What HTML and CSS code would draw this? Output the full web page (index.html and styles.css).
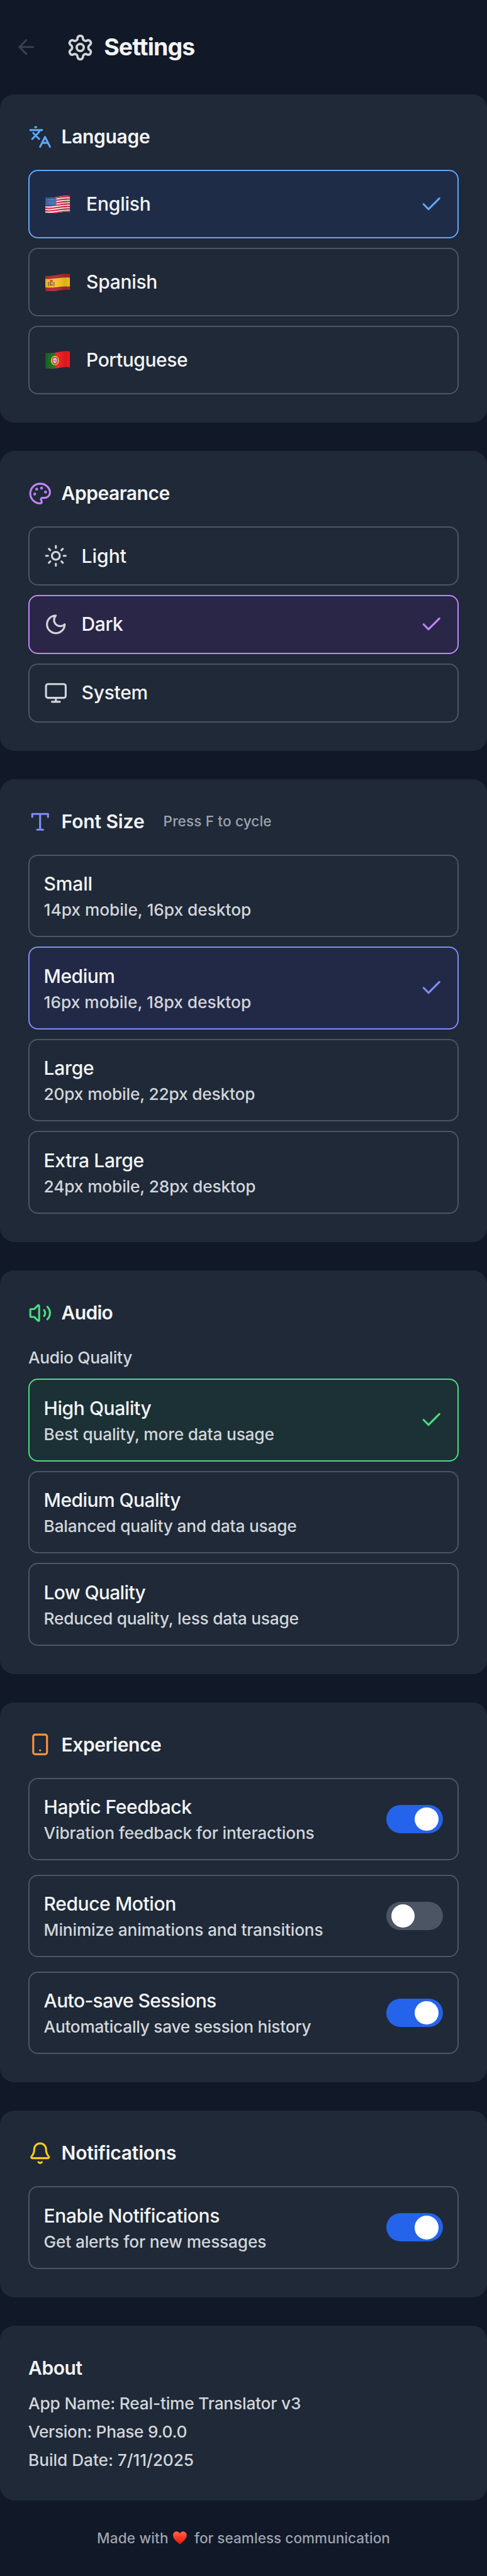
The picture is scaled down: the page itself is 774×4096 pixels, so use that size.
FILE: index.html
```html
<!DOCTYPE html>
<html lang="en">
<head>
<meta charset="utf-8">
<title>Settings</title>
<link rel="stylesheet" href="styles.css">
</head>
<body>
<svg class="defs" aria-hidden="true">
  <symbol id="check" viewBox="0 0 24 24"><path d="M20 6 9 17l-5-5"/></symbol>
  <linearGradient id="shade" x1="0" y1="0" x2="1" y2="0">
    <stop offset="0" stop-color="#000" stop-opacity=".12"/><stop offset=".3" stop-color="#fff" stop-opacity=".06"/>
    <stop offset=".8" stop-color="#000" stop-opacity=".12"/><stop offset="1" stop-color="#000" stop-opacity=".04"/>
  </linearGradient>
  <linearGradient id="heart" x1="0" y1="0" x2="0" y2="1"><stop offset="0" stop-color="#ff6a52"/><stop offset=".5" stop-color="#fb3522"/><stop offset="1" stop-color="#e0200f"/></linearGradient>
  <clipPath id="wave"><path d="M0 1.700C1 2.200 3 2.400 5.200 2.100 9.500 1.700 13 .2 17 .1 19 0 20.300 .2 21 .7V15.600C20 15.100 18 14.900 15.500 15.200 11.500 15.600 9 16.500 5 16.500 3 16.500 1 16.500 0 16Z"/></clipPath>
</svg>
<header class="header">
  <svg class="icon back" viewBox="0 0 24 24"><path d="m12 19-7-7 7-7M19 12H5"/></svg>
  <svg class="icon gear" viewBox="0 0 24 24"><path d="M12.220 2h-.44a2 2 0 0 0-2 2v.18a2 2 0 0 1-1 1.730l-.43.25a2 2 0 0 1-2 0l-.15-.08a2 2 0 0 0-2.730.73l-.22.38a2 2 0 0 0 .73 2.730l.15.1a2 2 0 0 1 1 1.720v.51a2 2 0 0 1-1 1.740l-.15.09a2 2 0 0 0-.73 2.730l.22.38a2 2 0 0 0 2.730.73l.15-.08a2 2 0 0 1 2 0l.43.25a2 2 0 0 1 1 1.730V20a2 2 0 0 0 2 2h.44a2 2 0 0 0 2-2v-.18a2 2 0 0 1 1-1.730l.43-.25a2 2 0 0 1 2 0l.15.08a2 2 0 0 0 2.730-.73l.22-.39a2 2 0 0 0-.73-2.730l-.15-.08a2 2 0 0 1-1-1.740v-.5a2 2 0 0 1 1-1.740l.15-.09a2 2 0 0 0 .73-2.730l-.22-.38a2 2 0 0 0-2.730-.73l-.15.08a2 2 0 0 1-2 0l-.43-.25a2 2 0 0 1-1-1.730V4a2 2 0 0 0-2-2z"/><circle cx="12" cy="12" r="3"/></svg>
  <h1 class="page-title">Settings</h1>
</header>
<main class="sections">
  <section class="card">
    <div class="card-head">
      <svg class="icon blue" viewBox="0 0 24 24"><path d="m5 8 6 6M4 14l6-6 2-3M2 5h12M7 2h1M22 22l-5-10-5 10M14 18h6"/></svg>
      <h2 class="title t-language">Language</h2>
    </div>
    <div class="options">
      <div class="option tall sel-blue">
        <svg class="flag" viewBox="0 0 21 16.500" preserveAspectRatio="none"><g clip-path="url(#wave)"><rect width="21" height="17" fill="#f7f4f5"/>
          <path d="M0 2.500C7 4 12 .2 21 1M0 4.800C7 6.300 12 2.500 21 3.300M0 7.100C7 8.600 12 4.800 21 5.600M0 9.400C7 10.900 12 7.100 21 7.900M0 11.700C7 13.200 12 9.400 21 10.200M0 14C7 15.500 12 11.700 21 12.500M0 16.300C7 17.800 12 14 21 14.800" fill="none" stroke="#dc1a35" stroke-width="1.150"/>
          <path d="M0 0H9.300V8.800C7 9.700 3 10.200 0 9.700Z" fill="#2a5b9f"/>
          <path d="M.8 3.800H9M.5 5.200H9M.8 6.600H9M.5 8H9" stroke="#b9cbe4" stroke-width=".55" stroke-dasharray=".55 .75"/>
          <rect width="21" height="17" fill="url(#shade)"/></g></svg>
        <span class="name t-english">English</span>
        <svg class="icon mark blue"><use href="#check"/></svg>
      </div>
      <div class="option tall">
        <svg class="flag" viewBox="0 0 21 16.500" preserveAspectRatio="none"><g clip-path="url(#wave)"><rect width="21" height="17" fill="#b0262f"/>
          <path d="M0 4.900C7 5.800 13 2.700 21 3.900V12.200C13 11.200 8 13.700 0 12.900Z" fill="#f7c81f"/>
          <rect x="3.700" y="7.300" width="2.800" height="4.200" rx="1" fill="#b5523b"/><path d="M3.900 6.700h2.400" stroke="#a8342c" stroke-width="1"/><path d="M2.700 7.800v4M7.400 7.800v4" stroke="#6d5f3c" stroke-width=".7"/><circle cx="5.500" cy="9.100" r=".7" fill="#dcc8cf"/>
          <rect width="21" height="17" fill="url(#shade)"/></g></svg>
        <span class="name t-spanish">Spanish</span>
      </div>
      <div class="option tall">
        <svg class="flag" viewBox="0 0 21 16.500" preserveAspectRatio="none"><g clip-path="url(#wave)"><rect width="21" height="17" fill="#f51c20"/><rect width="8.300" height="17" fill="#116a1b"/>
          <ellipse cx="8.200" cy="8.900" rx="3.500" ry="4.400" fill="#eed42c"/><ellipse cx="8.200" cy="8.900" rx="2.800" ry="3.500" fill="none" stroke="#69822c" stroke-width=".4"/>
          <path d="M6.100 6h4.200v3.800q0 2.400-2.100 2.800-2.100-.4-2.100-2.800Z" fill="#d12d3b"/><path d="M6.900 6.900h2.600v2.800q0 1.500-1.300 1.800-1.300-.3-1.300-1.800Z" fill="#eef1fa"/><path d="M8.200 7.400v3.400M7.200 8.900h2" stroke="#4870b5" stroke-width=".55"/>
          <rect width="21" height="17" fill="url(#shade)"/></g></svg>
        <span class="name t-portuguese">Portuguese</span>
      </div>
    </div>
  </section>

  <section class="card">
    <div class="card-head">
      <svg class="icon purple" viewBox="0 0 24 24"><g fill="currentColor"><circle cx="13.500" cy="6.500" r=".5"/><circle cx="17.500" cy="10.500" r=".5"/><circle cx="8.500" cy="7.500" r=".5"/><circle cx="6.500" cy="12.500" r=".5"/></g><path d="M12 2C6.500 2 2 6.500 2 12s4.500 10 10 10c.926 0 1.648-.746 1.648-1.688 0-.437-.18-.835-.437-1.125-.29-.289-.438-.652-.438-1.125a1.640 1.640 0 0 1 1.668-1.668h1.996c3.051 0 5.555-2.503 5.555-5.554C21.965 6.012 17.461 2 12 2z"/></svg>
      <h2 class="title t-appearance">Appearance</h2>
    </div>
    <div class="options">
      <div class="option short">
        <svg class="icon" viewBox="0 0 24 24"><circle cx="12" cy="12" r="4"/><path d="M12 2v2M12 20v2M4.930 4.930l1.410 1.410M17.660 17.660l1.410 1.410M2 12h2M20 12h2M6.340 17.660l-1.410 1.410M19.070 4.930l-1.410 1.410"/></svg>
        <span class="name t-light">Light</span>
      </div>
      <div class="option short sel-purple">
        <svg class="icon" viewBox="0 0 24 24"><path d="M12 3a6 6 0 0 0 9 9 9 9 0 1 1-9-9Z"/></svg>
        <span class="name t-dark">Dark</span>
        <svg class="icon mark purple"><use href="#check"/></svg>
      </div>
      <div class="option short">
        <svg class="icon" viewBox="0 0 24 24"><rect x="2" y="3" width="20" height="14" rx="2"/><path d="M8 21h8M12 17v4"/></svg>
        <span class="name t-system">System</span>
      </div>
    </div>
  </section>

  <section class="card">
    <div class="card-head">
      <svg class="icon indigo" viewBox="0 0 24 24"><path d="M4 7V4h16v3M9 20h6M12 4v16"/></svg>
      <h2 class="title t-fontsize">Font Size</h2>
      <span class="hint">Press F to cycle</span>
    </div>
    <div class="options">
      <div class="option"><div class="copy"><span class="name t-small">Small</span><span class="sub s-14">14px mobile, 16px desktop</span></div></div>
      <div class="option sel-indigo"><div class="copy"><span class="name t-medium">Medium</span><span class="sub s-16">16px mobile, 18px desktop</span></div><svg class="icon mark indigo"><use href="#check"/></svg></div>
      <div class="option"><div class="copy"><span class="name t-large">Large</span><span class="sub s-20">20px mobile, 22px desktop</span></div></div>
      <div class="option"><div class="copy"><span class="name t-xl">Extra Large</span><span class="sub s-24">24px mobile, 28px desktop</span></div></div>
    </div>
  </section>

  <section class="card">
    <div class="card-head">
      <svg class="icon green" viewBox="0 0 24 24"><path d="M11 4.702a.705.705 0 0 0-1.203-.498L6.413 7.587A1.400 1.400 0 0 1 5.416 8H3a1 1 0 0 0-1 1v6a1 1 0 0 0 1 1h2.416a1.400 1.400 0 0 1 .997.413l3.383 3.384A.705.705 0 0 0 11 19.298zM16 9a5 5 0 0 1 0 6M19.364 18.364a9 9 0 0 0 0-12.728"/></svg>
      <h2 class="title t-audio">Audio</h2>
    </div>
    <div class="group-label">Audio Quality</div>
    <div class="options">
      <div class="option sel-green"><div class="copy"><span class="name t-high">High Quality</span><span class="sub s-best">Best quality, more data usage</span></div><svg class="icon mark green"><use href="#check"/></svg></div>
      <div class="option"><div class="copy"><span class="name t-mq">Medium Quality</span><span class="sub s-bal">Balanced quality and data usage</span></div></div>
      <div class="option"><div class="copy"><span class="name t-low">Low Quality</span><span class="sub s-red">Reduced quality, less data usage</span></div></div>
    </div>
  </section>

  <section class="card">
    <div class="card-head">
      <svg class="icon orange" viewBox="0 0 24 24"><rect x="5" y="2" width="14" height="20" rx="2"/><path d="M12 18h.01"/></svg>
      <h2 class="title t-exp">Experience</h2>
    </div>
    <div class="options loose">
      <div class="option"><div class="copy"><span class="name t-haptic">Haptic Feedback</span><span class="sub s-vib">Vibration feedback for interactions</span></div><span class="toggle on"><span class="knob"></span></span></div>
      <div class="option"><div class="copy"><span class="name t-motion">Reduce Motion</span><span class="sub s-min">Minimize animations and transitions</span></div><span class="toggle"><span class="knob"></span></span></div>
      <div class="option"><div class="copy"><span class="name t-autosave">Auto-save Sessions</span><span class="sub s-auto">Automatically save session history</span></div><span class="toggle on"><span class="knob"></span></span></div>
    </div>
  </section>

  <section class="card">
    <div class="card-head">
      <svg class="icon yellow" viewBox="0 0 24 24"><path d="M10.268 21a2 2 0 0 0 3.464 0M3.262 15.326A1 1 0 0 0 4 17h16a1 1 0 0 0 .74-1.673C19.410 13.956 18 12.499 18 8A6 6 0 0 0 6 8c0 4.499-1.411 5.956-2.738 7.326"/></svg>
      <h2 class="title t-notif">Notifications</h2>
    </div>
    <div class="options">
      <div class="option"><div class="copy"><span class="name t-enable">Enable Notifications</span><span class="sub s-get">Get alerts for new messages</span></div><span class="toggle on"><span class="knob"></span></span></div>
    </div>
  </section>

  <section class="card about">
    <h2 class="title t-about">About</h2>
    <div class="facts">
      <p class="sub s-app">App Name: Real-time Translator v3</p>
      <p class="sub s-ver">Version: Phase 9.0.0</p>
      <p class="sub s-date">Build Date: 7/11/2025</p>
    </div>
  </section>
</main>
<footer class="footer">
  <span class="made">Made with</span>
  <svg class="heart" viewBox="0 0 24 22"><path d="M12 22C7 18 0 13 0 6.500 0 2.500 3 0 6.300 0 9 0 11 1.400 12 3.600 13 1.400 15 0 17.700 0 21 0 24 2.500 24 6.500 24 13 17 18 12 22Z" fill="url(#heart)"/></svg>
  <span class="for">for seamless communication</span>
</footer>
</body>
</html>
```

FILE: styles.css
```css
/* 1rem equals ten design pixels */
html { font-size: 18.772px; background: #111827; }
* { box-sizing: border-box; margin: 0; padding: 0; }
body { font-family: Inter, "Liberation Sans", sans-serif; color: #f3f4f6; background: #111827; white-space: nowrap; }
.defs { display: block; width: 0; height: 0; }

.icon { width: 2rem; height: 2rem; flex: none; fill: none; stroke: currentColor; stroke-width: 2; stroke-linecap: round; stroke-linejoin: round; color: #d1d5db; }
.blue { color: #60a5fa; }
.purple { color: #c084fc; }
.indigo { color: #818cf8; }
.green { color: #4ade80; }
.orange { color: #fb923c; }
.yellow { color: #facc15; }

.header { display: flex; align-items: center; height: 8rem; padding-left: 1.2rem; }
.back { color: #374151; margin-right: 2.4rem; }
.gear { width: 2.4rem; height: 2.4rem; margin-right: .8rem; }
.page-title { font-size: 2rem; line-height: 2.8rem; font-weight: 700; letter-spacing: -.024em; }

.sections { display: flex; flex-direction: column; gap: 2.4rem; }
.card { background: #1f2937; border-radius: 1.2rem; padding: 2.4rem; }
.card-head { display: flex; align-items: center; gap: .8rem; height: 2.4rem; margin-bottom: 1.6rem; }
.title { font-size: 1.6rem; line-height: 2.4rem; font-weight: 600; }
.hint { font-size: 1.2rem; line-height: 1.6rem; font-weight: 500; letter-spacing: .0074em; color: #9ca3af; margin-left: .8rem; }

.options { display: flex; flex-direction: column; gap: .8rem; }
.loose { gap: 1.2rem; }
.option { display: flex; align-items: center; gap: 1.2rem; height: 7rem; padding: 0 1.2rem; border: 2px solid #4b5563; border-radius: .8rem; }
.short { height: 5rem; }
.tall { height: 5.8rem; }
.sel-blue { border-color: #60a5fa; background: rgba(30, 58, 138, .2); }
.sel-purple { border-color: #c084fc; background: rgba(88, 28, 135, .2); }
.sel-indigo { border-color: #818cf8; background: rgba(49, 46, 129, .2); }
.sel-green { border-color: #4ade80; background: rgba(20, 83, 45, .2); }
.mark { margin-left: auto; }
.flag { width: 2.1rem; height: 1.5rem; margin: 0 .15rem; flex: none; }
.copy { display: flex; flex-direction: column; align-items: flex-start; }
.name { font-size: 1.6rem; line-height: 2.4rem; font-weight: 500; }
.sub, .group-label { font-size: 1.4rem; line-height: 2rem; font-weight: 500; color: #d1d5db; }
.group-label { margin-bottom: .8rem; letter-spacing: -.0116em; }

.toggle { display: flex; align-items: center; width: 4.8rem; height: 2.4rem; padding: 0 .4rem; margin-left: auto; border-radius: 1.2rem; background: #4b5563; }
.toggle.on { justify-content: flex-end; background: #2563eb; }
.knob { width: 2rem; height: 2rem; border-radius: 50%; background: #fff; }

.about .title { margin-bottom: .8rem; }
.facts { display: flex; flex-direction: column; align-items: flex-start; gap: .4rem; }

.footer { display: flex; align-items: center; justify-content: center; height: 6.4rem; font-size: 1.2rem; line-height: 1.6rem; font-weight: 500; color: #9ca3af; }
.heart { width: 1.16rem; height: 1.1rem; margin: 0 .64rem 0 .4rem; }
.made { letter-spacing: .0073em; }
.for { letter-spacing: .0024em; }

/* Tracking per label */
.t-language { letter-spacing: -.0116em; }
.t-english { letter-spacing: -.008em; }
.t-spanish { letter-spacing: -.0106em; }
.t-portuguese { letter-spacing: -.0157em; }
.t-appearance { letter-spacing: -.0166em; }
.t-light { letter-spacing: -.0006em; }
.t-dark { letter-spacing: -.0144em; }
.t-system { letter-spacing: -.0095em; }
.t-fontsize { letter-spacing: -.0042em; }
.t-small { letter-spacing: -.0054em; }
.t-medium { letter-spacing: -.0161em; }
.t-large { letter-spacing: -.0105em; }
.t-xl { letter-spacing: -.0127em; }
.t-audio { letter-spacing: -.0236em; }
.t-high { letter-spacing: -.0147em; }
.t-mq { letter-spacing: -.0186em; }
.t-low { letter-spacing: -.022em; }
.t-exp { letter-spacing: -.0144em; }
.t-haptic { letter-spacing: -.0143em; }
.t-motion { letter-spacing: -.0139em; }
.t-autosave { letter-spacing: -.0214em; }
.t-notif { letter-spacing: -.0083em; }
.t-enable { letter-spacing: -.0132em; }
.t-about { letter-spacing: -.0157em; }
.s-14 { letter-spacing: -.001em; }
.s-16 { letter-spacing: 0; }
.s-20 { letter-spacing: -.0067em; }
.s-24 { letter-spacing: -.0056em; }
.s-best { letter-spacing: -.0065em; }
.s-bal { letter-spacing: -.007em; }
.s-red { letter-spacing: -.0086em; }
.s-vib { letter-spacing: -.006em; }
.s-min { letter-spacing: -.0059em; }
.s-auto { letter-spacing: -.0106em; }
.s-get { letter-spacing: -.0063em; }
.s-app { letter-spacing: -.007em; }
.s-ver { letter-spacing: -.0112em; }
.s-date { letter-spacing: -.0025em; }
```
